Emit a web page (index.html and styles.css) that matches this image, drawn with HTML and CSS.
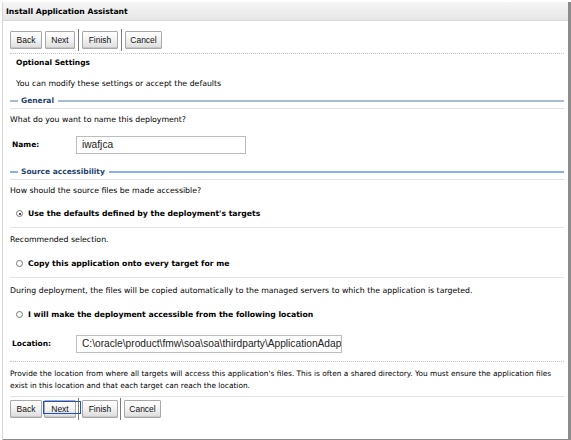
FILE: index.html
```html
<!doctype html>
<html>
  <head>
    <title>Install Application Assistant</title>
    <link rel="stylesheet" href="styles.css">
  </head>
  <body>
    <div class="frame">
      <div class="titlebar">Install Application Assistant</div>
      <div class="content">
        <div class="buttons top">
          <button class="btn back">Back</button>
          <button class="btn next">Next</button>
          <span class="sep"></span>
          <button class="btn finish">Finish</button>
          <span class="sep"></span>
          <button class="btn cancel">Cancel</button>
        </div>
        <div class="dotted"></div>

        <h2 class="heading">Optional Settings</h2>
        <p class="intro">You can modify these settings or accept the defaults</p>

        <div class="section general"><span class="lead"></span><span class="label">General</span><span class="tail"></span></div>
        <p class="text question">What do you want to name this deployment?</p>
        <div class="field name">
          <label>Name:</label>
          <input type="text" value="iwafjca">
        </div>

        <div class="section source"><span class="lead"></span><span class="label">Source accessibility</span><span class="tail"></span></div>
        <p class="text question how">How should the source files be made accessible?</p>

        <div class="radio first ruled"><span class="dot checked"></span>Use the defaults defined by the deployment's targets</div>
        <p class="text hint">Recommended selection.</p>
        <div class="radio second ruled"><span class="dot"></span>Copy this application onto every target for me</div>
        <p class="text hint during">During deployment, the files will be copied automatically to the managed servers to which the application is targeted.</p>
        <div class="radio third"><span class="dot"></span>I will make the deployment accessible from the following location</div>

        <div class="field location">
          <label>Location:</label>
          <input type="text" value="C:\oracle\product\fmw\soa\soa\thirdparty\ApplicationAdapters\iwafjca.rar">
        </div>
        <div class="dotted low"></div>
        <p class="text provide">Provide the location from where all targets will access this application's files. This is often a shared directory. You must ensure the application files exist in this location and that each target can reach the location.</p>

        <div class="buttons bottom">
          <button class="btn back">Back</button>
          <button class="btn next focused">Next</button>
          <span class="sep"></span>
          <button class="btn finish">Finish</button>
          <span class="sep"></span>
          <button class="btn cancel">Cancel</button>
        </div>
      </div>
    </div>
  </body>
</html>
```

FILE: styles.css
```css
* {
  margin: 0;
  padding: 0;
  box-sizing: border-box;
}

body {
  background: white;
  font-family: "DejaVu Sans", Tahoma, sans-serif;
  font-size: 7.8px;
  color: #000;
}

div.frame {
  margin-left: 2px;
  width: 569px;
  height: 440px;
  border-left: 1px solid #d6d6d6;
  border-right: 3px solid #8c8c8c;
  border-bottom: 3px solid #8c8c8c;
}

div.titlebar {
  margin-top: 2px;
  height: 19px;
  line-height: 19px;
  padding-left: 3px;
  font-weight: bold;
  font-size: 7.7px;
  background: linear-gradient(#f6f6f6, #e6e6e6);
  border-bottom: 1px solid #dadada;
}

div.content {
  padding-left: 7px;
  padding-right: 4px;
}

/* button rows */
div.buttons {
  display: flex;
  align-items: center;
  height: 22px;
}
div.buttons.top {
  margin-top: 8px;
}
div.buttons.bottom {
  margin-top: 1px;
}

button.btn {
  height: 18px;
  font-family: "Liberation Sans", Arial, sans-serif;
  font-size: 8.5px;
  color: #111;
  border: 1px solid #a8a8a8;
  border-radius: 1px;
  background: linear-gradient(#ffffff, #f2f2f2 50%, #dcdcdc);
  box-shadow: inset 0 -1px 0 #c8c8c8;
  position: relative;
}
button.back { width: 32px; }
button.next { width: 30px; margin-left: 3px; }
button.finish { width: 36px; }
button.cancel { width: 37px; }

span.sep {
  width: 1px;
  height: 22px;
  background: #7a7a7a;
  margin: 0 3px;
}

div.buttons.bottom button.next {
  width: 32px;
  margin-left: 2px;
}
div.buttons.bottom span.sep {
  margin-left: 2px;
}
button.focused::after {
  content: "";
  position: absolute;
  left: -2px;
  right: -6px;
  top: 0;
  bottom: 3px;
  border: 1px solid #1d4fd8;
}

div.dotted {
  margin-top: 2px;
  height: 1px;
  border-top: 1px dotted #c4c4c4;
}
div.dotted.low {
  margin-top: 8px;
}

h2.heading {
  font-size: 7.5px;
  font-weight: bold;
  line-height: 18px;
  padding-left: 6px;
}

p.intro {
  margin-top: 3px;
  line-height: 18px;
  padding-left: 6px;
}

/* section headers */
div.section {
  display: flex;
  align-items: center;
  height: 16px;
  border-bottom: 1px solid #e2e2e2;
  font-weight: bold;
  color: #1f3f6e;
  font-size: 7.5px;
}
div.section span.lead {
  width: 8px;
  height: 2px;
  background: #a7bcd6;
  margin-right: 3px;
}
div.section span.tail {
  flex: 1;
  height: 2px;
  background: #a7bcd6;
  margin-left: 4px;
}
div.section.source span.lead,
div.section.source span.tail {
  background: #8eaee6;
}
div.section.source {
  margin-top: 10px;
}

p.text {
  line-height: 22px;
}
p.text.how {
  margin-top: 0;
}

div.field {
  display: flex;
  align-items: center;
  margin-top: 4px;
  height: 19px;
}
div.field label {
  width: 66px;
  padding-left: 2px;
  font-weight: bold;
  font-size: 7.5px;
}
div.field input {
  height: 18px;
  border: 1px solid #bdbdbd;
  padding-left: 5px;
  font-family: "Liberation Sans", Arial, sans-serif;
  font-size: 10.2px;
  color: #222;
}
div.field.name input { width: 170px; }
div.field.location {
  margin-top: 9px;
}
div.field.location input { width: 266px; }

/* radios */
div.radio {
  display: flex;
  align-items: center;
  margin-top: 1px;
  height: 22px;
  padding-left: 6px;
  font-weight: bold;
  font-size: 7.7px;
}
div.radio.ruled {
  height: 25px;
  padding-bottom: 3px;
  border-bottom: 1px solid #e4e4e4;
}
div.radio.second {
  margin-top: 2px;
}
div.radio.third {
  margin-top: 1px;
}
span.dot {
  width: 7px;
  height: 7px;
  border: 1px solid #777;
  border-radius: 50%;
  margin-right: 5px;
  position: relative;
  background: white;
}
span.dot.checked::after {
  content: "";
  position: absolute;
  left: 1.5px;
  top: 1.5px;
  width: 2px;
  height: 2px;
  border-radius: 50%;
  background: #111;
}

p.hint {
  margin-top: 1px;
}
p.hint.during {
  margin-top: 2px;
}

p.provide {
  margin-top: 6px;
  line-height: 12px;
  font-size: 7.4px;
  padding-bottom: 4px;
  border-bottom: 1px solid #e2e2e2;
}
```
